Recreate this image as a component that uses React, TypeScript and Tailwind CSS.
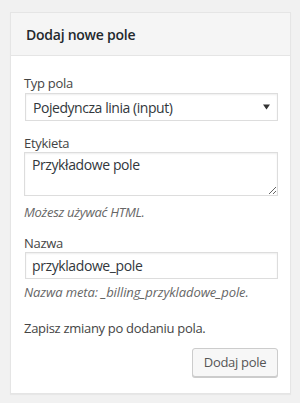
import React from "react";

export default function App() {
  const font = { fontFamily: '"Open Sans", "Noto Sans", sans-serif' };
  return (
    <div className="w-[300px] h-[403px] bg-[#f1f1f1] pt-[12px] pl-[10px]" style={font}>
      <div className="w-[281px] bg-white border border-[#e5e5e5] shadow-[0_1px_1px_rgba(0,0,0,0.04)]">
        <div className="h-[43px] bg-[#f5f5f5] border-b border-[#e5e5e5] flex items-center px-[15px]">
          <span className="text-[14px] font-semibold text-[#23282d] tracking-[-0.25px]">Dodaj nowe pole</span>
        </div>
        <div className="flex flex-col pl-[13px] pr-[11px] pt-[18px] pb-[16px] text-[13px] text-[#444] tracking-[-0.3px]">
          <div className="h-[18px] leading-[18px]">Typ pola</div>
          <div className="mt-[1px] ml-[1px] w-[253px] h-[28px] border border-[#ddd] shadow-[inset_0_1px_2px_rgba(0,0,0,0.07)] flex items-center justify-between pl-[7px] pr-[7px] text-[14px] text-[#32373c] tracking-[-0.45px]">
            <span>Pojedyncza linia (input)</span>
            <svg width="7" height="6" viewBox="0 0 7 6"><path d="M0 0.5 H7 L3.5 5.5 Z" fill="#333" /></svg>
          </div>
          <div className="mt-[14px] h-[17px] leading-[17px]">Etykieta</div>
          <textarea
            readOnly
            defaultValue="Przykładowe pole"
            className="w-[254px] h-[44px] border border-[#ddd] shadow-[inset_0_1px_2px_rgba(0,0,0,0.07)] px-[7px] py-[2px] text-[14px] leading-[20px] text-[#32373c] tracking-[-0.4px] outline-none"
          />
          <div className="mt-[7px] h-[18px] leading-[18px] italic text-[#666]">Możesz używać HTML.</div>
          <div className="mt-[13px] h-[18px] leading-[18px]">Nazwa</div>
          <div className="ml-[1px] w-[253px] h-[27px] border border-[#ddd] shadow-[inset_0_1px_2px_rgba(0,0,0,0.07)] flex items-center px-[6px] text-[14px] text-[#32373c] tracking-[-0.4px]">
            przykladowe_pole
          </div>
          <div className="mt-[4px] h-[18px] leading-[18px] italic text-[#666] tracking-[-0.1px]">Nazwa meta: _billing_przykladowe_pole.</div>
          <div className="mt-[18px] h-[18px] leading-[18px]">Zapisz zmiany po dodaniu pola.</div>
          <div className="mt-[11px] flex justify-end pr-[1px]">
            <div className="w-[86px] h-[29px] rounded-[3px] border border-[#ccc] bg-[#f7f7f7] shadow-[0_1px_0_#ccc] flex items-center justify-center text-[13px] text-[#555]">
              Dodaj pole
            </div>
          </div>
        </div>
      </div>
    </div>
  );
}
